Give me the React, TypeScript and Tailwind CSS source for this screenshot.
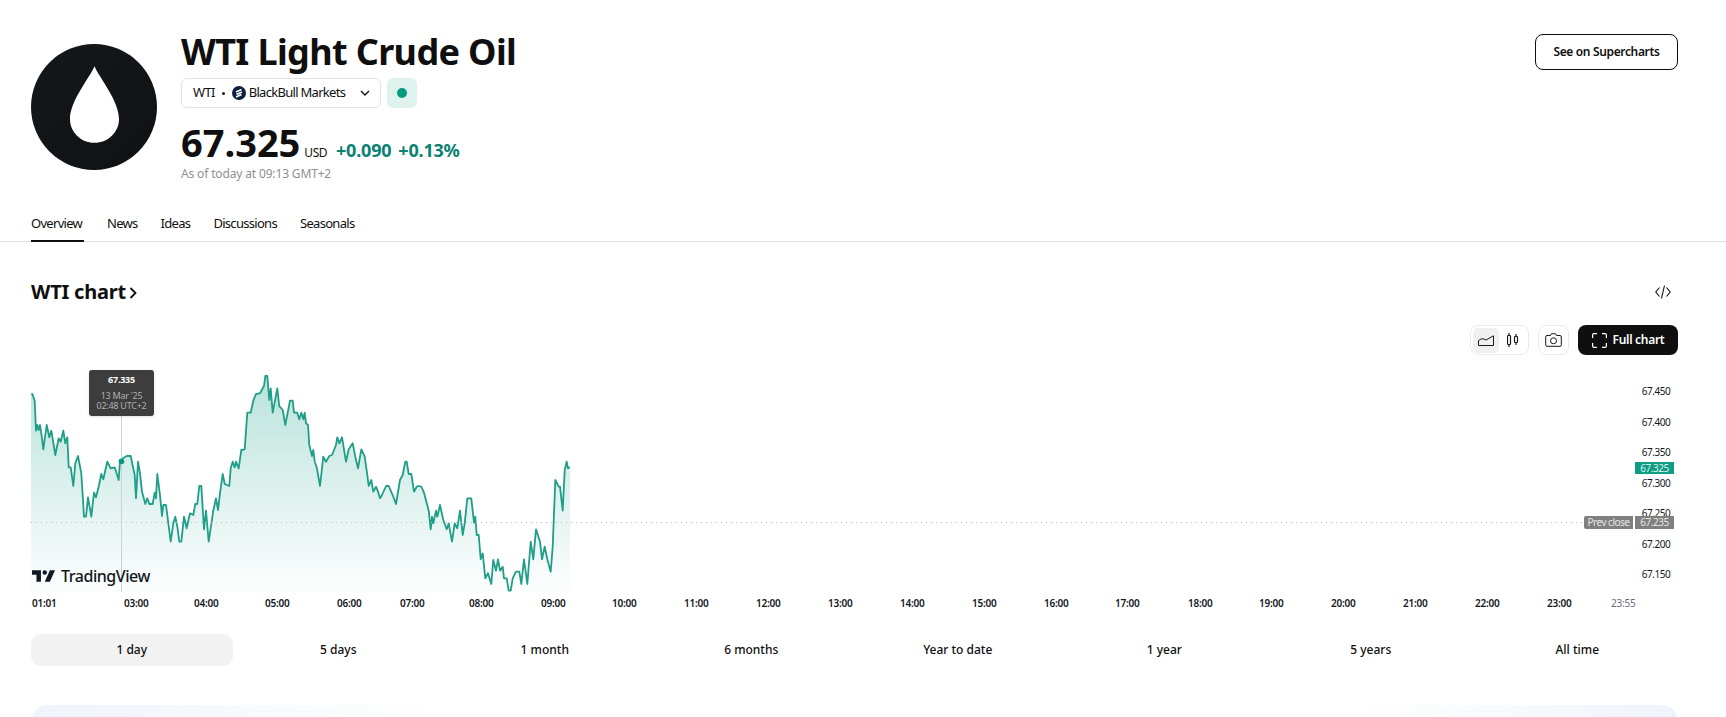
const z2: number[][] = [[95,100],[98,105],[104,122],[108,212],[112,195],[116,210],[120,195],[126,235],[130,268],[140,195],[148,232],[154,212],[166,285],[176,235],[182,245],[190,212],[196,250],[202,232],[206,322],[212,322],[220,378],[226,310],[234,288],[244,340],[252,470],[258,470],[264,412],[274,470],[282,398],[288,412],[296,380],[304,342],[310,358],[322,305],[332,325],[344,322],[356,360],[360,300],[380,288],[392,288],[404,345],[408,415],[414,305],[420,340],[426,395],[436,432],[442,415],[448,432],[458,432],[464,398],[468,415],[472,342],[480,405],[486,468],[490,435],[498,435],[512,545],[520,490],[526,470],[532,500],[538,545],[544,545],[552,470],[560,505],[570,460],[580,465],[586,432],[592,432],[598,378],[604,378],[612,508],[618,452],[626,545],[640,452],[648,415],[654,450],[660,400],[668,342],[674,372],[688,378],[692,325],[698,305],[704,322],[708,305],[716,325],[724,270],[734,268],[742,158],[752,158],[760,122],[768,102],[780,100],[792,78],[796,48],[802,48],[808,120],[812,85],[818,158],[832,85],[838,140]];
const z3: number[][] = [[0,140],[8,150],[16,195],[30,122],[38,122],[42,158],[52,158],[58,178],[64,158],[70,178],[74,158],[78,190],[84,195],[88,255],[96,288],[100,270],[104,305],[110,322],[120,378],[130,290],[138,305],[148,288],[156,285],[168,255],[172,232],[178,250],[186,232],[198,305],[206,268],[218,250],[226,290],[234,325],[244,268],[254,290],[262,345],[266,378],[274,360],[280,395],[288,380],[294,395],[300,415],[306,405],[318,378],[326,378],[340,410],[348,432],[360,360],[368,345],[376,305],[380,305],[386,342],[394,342],[402,395],[410,380],[416,378],[424,380],[432,398],[446,452],[452,508],[456,470],[460,490],[468,452],[472,470],[480,435],[490,480],[500,508],[506,490],[516,545],[524,490],[532,505],[540,452],[548,525],[554,490],[562,415],[574,415],[582,488],[586,470],[590,525],[596,525],[602,598],[608,580],[616,655],[624,640],[634,672],[640,600],[648,632],[654,598],[660,632],[668,620],[672,655],[680,655],[686,692],[692,692],[698,655],[708,635],[718,635],[724,672],[732,598],[742,672],[752,545],[760,598],[768,508],[780,545],[786,598],[794,560],[802,598],[812,635],[818,560],[826,360],[836,380],[840,380],[848,452],[854,330],[860,305],[864,325],[870,322]];
const pts = [
  ...z2.map(([x, y]) => [x / 3, 360 + y / 3]),
  ...z3.map(([x, y]) => [280 + x / 3, 360 + y / 3]),
];
const line = pts.map(([x, y]) => `${x.toFixed(1)},${y.toFixed(1)}`).join(" L");
const lastX = pts[pts.length - 1][0].toFixed(1);

const ranges = ["1 day", "5 days", "1 month", "6 months", "Year to date", "1 year", "5 years", "All time"];
const prices = ["67.450", "67.400", "67.350", "67.300", "67.250", "67.200", "67.150"];
const times: [string, string][] = [
  ["01:01", "w-[92px]"], ["03:00", "w-[70px]"], ["04:00", "w-[71px]"], ["05:00", "w-[72px]"],
  ["06:00", "w-[63px]"], ["07:00", "w-[69px]"], ["08:00", "w-[72px]"], ["09:00", "w-[71px]"],
  ["10:00", "w-[72px]"], ["11:00", "w-[72px]"], ["12:00", "w-[72px]"], ["13:00", "w-[72px]"],
  ["14:00", "w-[72px]"], ["15:00", "w-[72px]"], ["16:00", "w-[71px]"], ["17:00", "w-[73px]"],
  ["18:00", "w-[71px]"], ["19:00", "w-[72px]"], ["20:00", "w-[72px]"], ["21:00", "w-[72px]"],
  ["22:00", "w-[72px]"], ["23:00", "w-[64px]"],
];

export default function App() {
  return (
    <div className="h-[717px] overflow-hidden bg-white font-['Noto_Sans',sans-serif] text-[#0f0f0f]">
      <header className="flex h-[213px] justify-between pl-[31px] pr-[48px] pt-[30px]">
        <div className="flex">
          <div className="mt-[14px] flex h-[126px] w-[126px] items-center justify-center rounded-full bg-gradient-to-br from-[#15181b] to-[#0f1113]">
            <svg viewBox="0 0 50 78" className="-mt-[6px] h-[77px] w-[49px]" fill="#ffffff">
              <path d="M25 0 C30 12 50 35 50 54 C50 67 39 78 25 78 C11 78 0 67 0 54 C0 35 20 12 25 0 Z" />
            </svg>
          </div>
          <div className="ml-[24px]">
            <h1 className="h-[44px] whitespace-nowrap text-[36px] font-bold leading-[44px] tracking-[-0.63px]">WTI Light Crude Oil</h1>
            <div className="mt-[4px] flex gap-[6px]">
              <div className="flex h-[30px] w-[200px] items-center whitespace-nowrap rounded-[6px] border border-[#e3e3e3] pl-[11px] pr-[10px] text-[13px] tracking-[-0.7px]">
                <span>WTI</span>
                <span className="ml-[7px] mr-[7px] h-[3px] w-[3px] rounded-full bg-[#0f0f0f]" />
                <svg viewBox="0 0 14 14" className="mr-[3px] h-[14px] w-[14px]">
                  <circle cx="7" cy="7" r="7" fill="#0c1f3f" />
                  <path d="M4 6 L9.5 3.5 M4.5 8.5 L10 6 M4 11 L9.5 8.5" stroke="#ffffff" strokeWidth="1.5" fill="none" />
                </svg>
                <span>BlackBull Markets</span>
                <svg viewBox="0 0 10 6" className="ml-auto h-[6px] w-[10px]" fill="none" stroke="#0f0f0f" strokeWidth="1.3">
                  <path d="M1 1 L5 5 L9 1" />
                </svg>
              </div>
              <div className="flex h-[30px] w-[30px] items-center justify-center rounded-[6px] bg-[#dff3ee]">
                <span className="h-[10px] w-[10px] rounded-full bg-[#089981]" />
              </div>
            </div>
            <div className="mt-[16px] flex h-[36px] items-baseline">
              <span className="text-[38px] font-bold leading-[36px]">67.325</span>
              <span className="ml-[4px] text-[12px] tracking-[-0.5px]">USD</span>
              <span className="ml-[9px] text-[18px] font-bold tracking-[-0.2px] text-[#0a8270]">+0.090</span>
              <span className="ml-[7px] text-[18px] font-bold tracking-[-0.2px] text-[#0a8270]">+0.13%</span>
            </div>
            <p className="mt-[6px] text-[12px] leading-[16px] tracking-[-0.15px] text-[#8f8f8f]">As of today at 09:13 GMT+2</p>
          </div>
        </div>
        <button className="mt-[4px] h-[36px] w-[143px] rounded-[8px] border border-[#0f0f0f] text-[12px] font-semibold tracking-[-0.35px]">See on Supercharts</button>
      </header>

      <nav className="flex h-[29px] gap-[23px] border-b border-[#e0e0e0] pl-[31px] text-[13px] leading-[18px] tracking-[-0.7px]">
        <a className="h-[29px] w-[53px] border-b-2 border-[#0f0f0f] pt-[1px]">Overview</a>
        <a className="pt-[1px]">News</a>
        <a className="pt-[1px]">Ideas</a>
        <a className="pt-[1px]">Discussions</a>
        <a className="pt-[1px]">Seasonals</a>
      </nav>

      <div className="flex items-center justify-between pl-[31px] pr-[48px] pt-[36px]">
        <h2 className="flex items-center text-[20px] font-bold leading-[28px] tracking-[-0.2px]">
          WTI chart
          <svg viewBox="0 0 8 12" className="ml-[3px] mt-[2px] h-[12px] w-[8px]" fill="none" stroke="#0f0f0f" strokeWidth="1.8">
            <path d="M1.5 1 L6.5 6 L1.5 11" />
          </svg>
        </h2>
        <svg viewBox="0 0 16 14" className="mr-[7px] h-[14px] w-[16px]" fill="none" stroke="#0f0f0f" strokeWidth="1.1">
          <path d="M4.5 2.5 L0.8 7 L4.5 11.5 M11.5 2.5 L15.2 7 L11.5 11.5 M9.5 0.5 L6.5 13.5" />
        </svg>
      </div>

      <div className="flex justify-end gap-[9px] pr-[48px] pt-[19px]">
        <div className="flex h-[30px] w-[59px] items-center gap-[2px] rounded-[8px] border border-[#ebebeb] p-[2px]">
          <span className="flex h-[25px] w-[26px] items-center justify-center rounded-[5px] bg-[#f0f0f0]">
            <svg viewBox="0 0 16 11" className="h-[11px] w-[16px]" fill="none" stroke="#1a1a1a" strokeWidth="1">
              <path d="M0.5 5.5 Q3.5 3 6 4 L8 5 L15.5 0.8 V10.5 H0.5 Z" />
            </svg>
          </span>
          <span className="flex h-[25px] w-[26px] items-center justify-center">
            <svg viewBox="0 0 12 14" className="h-[14px] w-[12px]" fill="none" stroke="#1a1a1a" strokeWidth="1.2">
              <path d="M2 0 V2.5 M2 11.5 V14 M9 1 V3.5 M9 9.5 V12" />
              <rect x="0.5" y="2.5" width="3" height="9" rx="0.8" />
              <rect x="7.5" y="3.5" width="3" height="6" rx="0.8" />
            </svg>
          </span>
        </div>
        <div className="flex h-[30px] w-[31px] items-center justify-center rounded-[8px] border border-[#ebebeb]">
          <svg viewBox="0 0 17 14" className="h-[14px] w-[17px]" fill="none" stroke="#1a1a1a" strokeWidth="1">
            <path d="M5.5 2.5 L6.5 0.7 H10.5 L11.5 2.5 H15 Q16.3 2.5 16.3 4 V11.8 Q16.3 13.3 15 13.3 H2 Q0.7 13.3 0.7 11.8 V4 Q0.7 2.5 2 2.5 Z" />
            <circle cx="8.5" cy="7.8" r="3" />
          </svg>
        </div>
        <button className="flex h-[30px] w-[100px] items-center justify-center gap-[6px] rounded-[8px] bg-[#0f0f0f] text-[12px] font-semibold tracking-[-0.3px] text-white">
          <svg viewBox="0 0 15 15" className="h-[15px] w-[15px]" fill="none" stroke="#ffffff" strokeWidth="1.2">
            <path d="M0.6 5 V2 Q0.6 0.6 2 0.6 H5 M10 0.6 H13 Q14.4 0.6 14.4 2 V5 M14.4 10 V13 Q14.4 14.4 13 14.4 H10 M5 14.4 H2 Q0.6 14.4 0.6 13 V10" />
          </svg>
          Full chart
        </button>
      </div>

      <div className="ml-[31px] mr-[52px] mt-[5px] flex h-[236px]">
        <div className="relative flex-1">
          <svg viewBox="31 360 540 236" className="absolute left-0 top-0 h-[236px] w-[540px]">
            <defs>
              <linearGradient id="area" x1="0" y1="375" x2="0" y2="592" gradientUnits="userSpaceOnUse">
                <stop offset="0" stopColor="#089981" stopOpacity="0.28" />
                <stop offset="1" stopColor="#089981" stopOpacity="0.01" />
              </linearGradient>
            </defs>
            <path d={`M31,${pts[0][1].toFixed(1)} L${line} L${lastX},592 L31,592 Z`} fill="url(#area)" />
            <path d={`M${line}`} fill="none" stroke="#1f9e88" strokeWidth="1.8" strokeLinejoin="round" />
            <line x1="121.5" y1="416" x2="121.5" y2="592" stroke="#d0d0d0" strokeWidth="1" />
            <circle cx="121.5" cy="461.5" r="2.8" fill="#089981" />
          </svg>
          <svg className="absolute left-0 top-[162px] h-[1px] w-[1553px]">
            <line x1="0" y1="0.5" x2="1553" y2="0.5" stroke="#b8b8b8" strokeWidth="1" strokeDasharray="1 4" />
          </svg>
          <div className="absolute left-[58px] top-[10px] flex h-[46px] w-[65px] flex-col items-center rounded-[3px] bg-[#3d3d3d] pt-[5px] text-[9px] leading-[10px] tracking-[-0.25px] text-[#b0b0b0] shadow-sm">
            <span className="font-bold text-white">67.335</span>
            <span className="mt-[6px]">13 Mar '25</span>
            <span>02:48 UTC+2</span>
          </div>
          <div className="absolute left-[1px] top-[209px] flex items-center gap-[6px]">
            <svg viewBox="0 0 36 18" className="h-[12px] w-[23px]" fill="#131722">
              <path d="M14 18H7V7H0V0h14v18z" />
              <circle cx="20" cy="3.5" r="3.5" />
              <path d="M28 18h-8l8-18h8l-8 18z" />
            </svg>
            <span className="text-[16px] font-medium leading-[14px] tracking-[-0.45px] text-[#131722]">TradingView</span>
          </div>
        </div>
        <div className="relative flex w-[39px] flex-col items-center gap-[18.5px] pl-[3px] pt-[25px] text-[10px] leading-[12px] tracking-[-0.5px] text-[#131722]">
          {prices.map((p) => (
            <span key={p}>{p}</span>
          ))}
          <span className="absolute left-0 top-[102px] h-[12px] w-[39px] bg-[#0f9d84] text-center text-[#d8f3ec]">67.325</span>
          <span className="absolute left-[-51px] top-[156px] h-[13px] w-[49px] rounded-l-[2px] bg-[#808080] text-center leading-[13px] text-[#e6e6e6]">Prev close</span>
          <span className="absolute left-0 top-[156px] h-[13px] w-[39px] bg-[#808080] text-center leading-[13px] text-[#e6e6e6]">67.235</span>
        </div>
      </div>

      <div className="ml-[32px] flex h-[14px] text-[10px] font-semibold leading-[14px] tracking-[-0.2px] text-[#131722]">
        {times.map(([t, w]) => (
          <span key={t} className={w}>{t}</span>
        ))}
        <span className="font-normal text-[#6a6d78]">23:55</span>
      </div>

      <div className="ml-[31px] mr-[48px] mt-[24px] grid h-[32px] grid-cols-8 gap-[5px]">
        {ranges.map((r, i) => (
          <div key={r} className={`flex items-center justify-center rounded-[10px] text-[12px] font-medium ${i === 0 ? "bg-[#f2f2f2]" : ""}`}>{r}</div>
        ))}
      </div>

      <div className="relative ml-[31px] mr-[48px] mt-[39px] h-[40px] overflow-hidden rounded-t-[16px] bg-gradient-to-r from-[#eff3fb] via-white via-25% to-white">
        <div className="absolute right-0 top-0 h-full w-[320px] bg-gradient-to-l from-[#eff3fb] to-transparent" />
      </div>
    </div>
  );
}
